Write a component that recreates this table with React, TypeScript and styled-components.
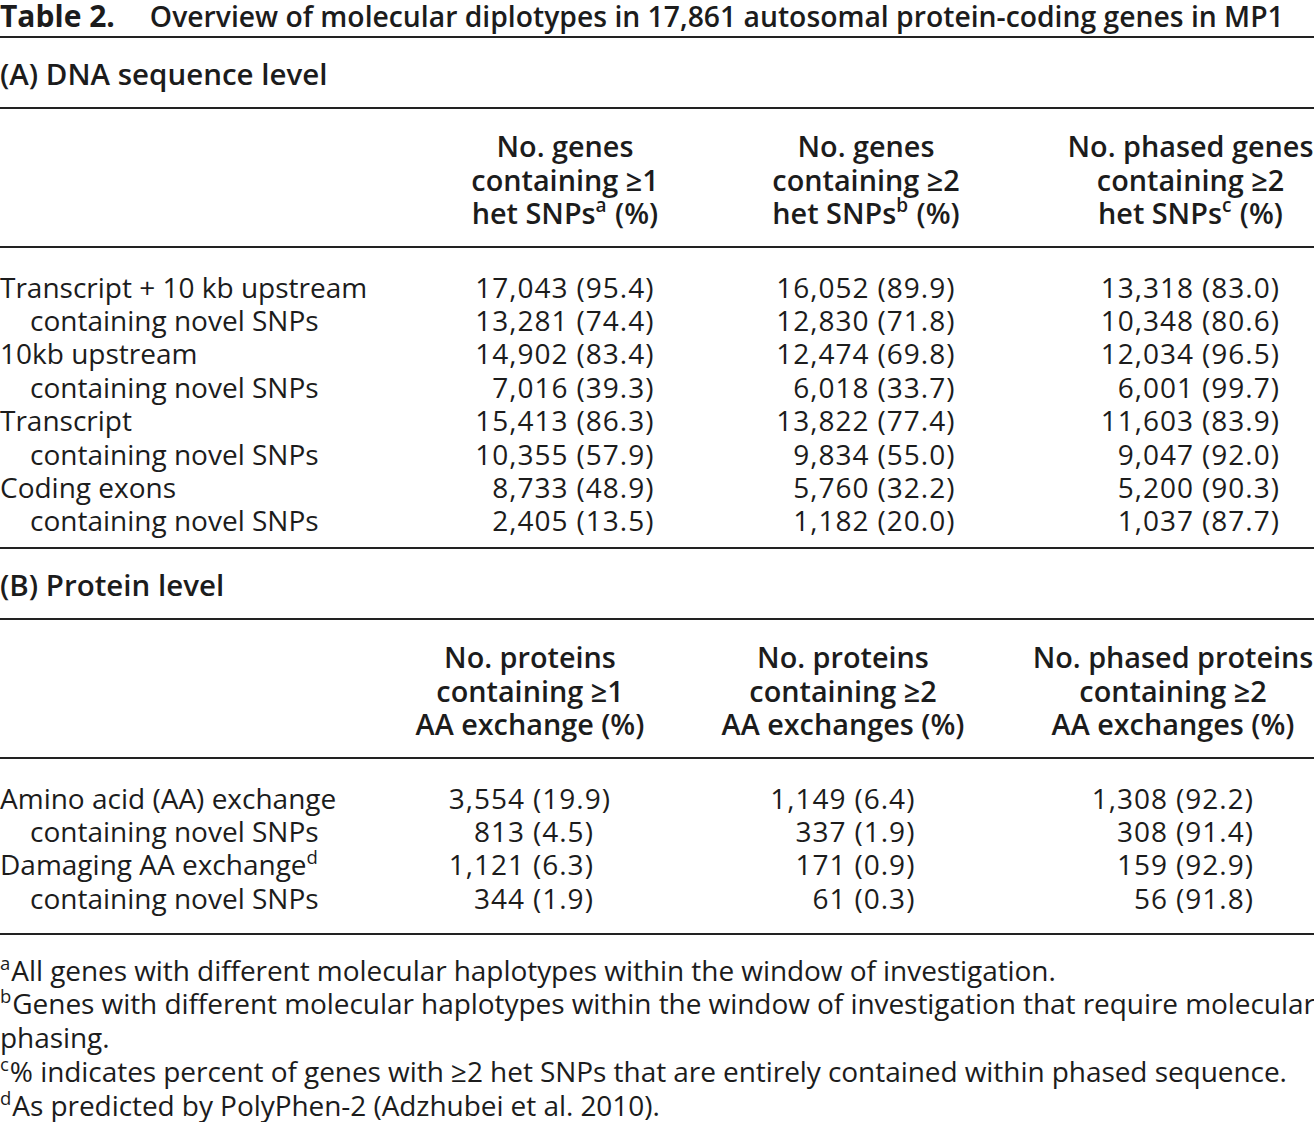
import React from "react";
import styled, { createGlobalStyle } from "styled-components";

const GlobalStyle = createGlobalStyle`
  html, body {
    margin: 0;
    padding: 0;
    background: #ffffff;
  }
  body {
    font-family: "Open Sans", "Noto Sans", "DejaVu Sans", sans-serif;
    color: #1c1c1c;
  }
`;

const Page = styled.div`
  width: 1314px;
  overflow: hidden;
  font-size: 28px;
  line-height: 33.4px;
`;

const Caption = styled.div`
  display: flex;
  align-items: baseline;
  gap: 35px;
  height: 36px;
  font-size: 28.3px;
  line-height: 31px;
  white-space: nowrap;
  font-weight: 600;
  border-bottom: 2px solid #222;

  b {
    font-size: 30px;
    font-weight: 700;
  }
`;

const SectionTitle = styled.div`
  padding: 19px 0 17px;
  font-size: 29.5px;
  font-weight: 600;
  border-bottom: 2px solid #222;
`;

type RowProps = { $cols: string; $head?: boolean; $pad: string };

const Row = styled.div<RowProps>`
  display: grid;
  grid-template-columns: ${(p) => p.$cols};
  padding: ${(p) => p.$pad};
  font-size: ${(p) => (p.$head ? "28.8px" : "inherit")};
  font-weight: ${(p) => (p.$head ? 600 : 400)};
  border-bottom: ${(p) => (p.$head ? "2px solid #222" : "none")};
`;

const Body = styled.div`
  border-bottom: 2px solid #222;
`;

const HeadCell = styled.div<{ $shift?: number }>`
  text-align: center;
  white-space: nowrap;
  padding-left: ${(p) => p.$shift ?? 0}px;
`;

const Label = styled.div<{ $indent?: boolean }>`
  white-space: nowrap;
  padding-left: ${(p) => (p.$indent ? 30 : 0)}px;
`;

const ValueCell = styled.div<{ $shift?: number }>`
  display: flex;
  justify-content: center;
  padding-left: ${(p) => p.$shift ?? 0}px;
  white-space: nowrap;
  letter-spacing: 1px;
`;

const Count = styled.span<{ $w: number }>`
  display: inline-block;
  width: ${(p) => p.$w}px;
  text-align: right;
`;

const Pct = styled.span<{ $w: number }>`
  display: inline-block;
  width: ${(p) => p.$w}px;
  margin-left: 8px;
  text-align: left;
`;

const Sup = styled.span`
  display: inline-block;
  font-size: 0.66em;
  line-height: 1;
  vertical-align: 0.62em;
  letter-spacing: 0;
  margin-right: 1px;
`;

const Notes = styled.div`
  padding-top: 19px;
  letter-spacing: -0.06px;
`;

const Note = styled.div`
  white-space: nowrap;
`;

type ColSpec = { shift?: number; countW: number; pctW: number };

type DataRow = {
  label: string;
  sup?: string;
  indent?: boolean;
  values: [string, string][];
};

type Section = {
  title: string;
  cols: string;
  colSpecs: ColSpec[];
  heads: React.ReactNode[][];
  rows: DataRow[];
  bodyPad: string;
};

const ge = "\u2265";

const sections: Section[] = [
  {
    title: "(A) DNA sequence level",
    cols: "415px 300px 302px 297px",
    colSpecs: [
      { countW: 94, pctW: 79 },
      { countW: 94, pctW: 79 },
      { shift: 50, countW: 94, pctW: 79 },
    ],
    heads: [
      ["No. genes", `containing ${ge}1`, <>het SNPs<Sup>a</Sup> (%)</>],
      ["No. genes", `containing ${ge}2`, <>het SNPs<Sup>b</Sup> (%)</>],
      ["No. phased genes", `containing ${ge}2`, <>het SNPs<Sup>c</Sup> (%)</>],
    ],
    bodyPad: "23px 0 9px",
    rows: [
      { label: "Transcript + 10 kb upstream", values: [["17,043", "(95.4)"], ["16,052", "(89.9)"], ["13,318", "(83.0)"]] },
      { label: "containing novel SNPs", indent: true, values: [["13,281", "(74.4)"], ["12,830", "(71.8)"], ["10,348", "(80.6)"]] },
      { label: "10kb upstream", values: [["14,902", "(83.4)"], ["12,474", "(69.8)"], ["12,034", "(96.5)"]] },
      { label: "containing novel SNPs", indent: true, values: [["7,016", "(39.3)"], ["6,018", "(33.7)"], ["6,001", "(99.7)"]] },
      { label: "Transcript", values: [["15,413", "(86.3)"], ["13,822", "(77.4)"], ["11,603", "(83.9)"]] },
      { label: "containing novel SNPs", indent: true, values: [["10,355", "(57.9)"], ["9,834", "(55.0)"], ["9,047", "(92.0)"]] },
      { label: "Coding exons", values: [["8,733", "(48.9)"], ["5,760", "(32.2)"], ["5,200", "(90.3)"]] },
      { label: "containing novel SNPs", indent: true, values: [["2,405", "(13.5)"], ["1,182", "(20.0)"], ["1,037", "(87.7)"]] },
    ],
  },
  {
    title: "(B) Protein level",
    cols: "380px 300px 326px 308px",
    colSpecs: [
      { countW: 77, pctW: 79 },
      { countW: 77, pctW: 62 },
      { shift: 26, countW: 77, pctW: 79 },
    ],
    heads: [
      ["No. proteins", `containing ${ge}1`, "AA exchange (%)"],
      ["No. proteins", `containing ${ge}2`, "AA exchanges (%)"],
      ["No. phased proteins", `containing ${ge}2`, "AA exchanges (%)"],
    ],
    bodyPad: "23px 0 17px",
    rows: [
      { label: "Amino acid (AA) exchange", values: [["3,554", "(19.9)"], ["1,149", "(6.4)"], ["1,308", "(92.2)"]] },
      { label: "containing novel SNPs", indent: true, values: [["813", "(4.5)"], ["337", "(1.9)"], ["308", "(91.4)"]] },
      { label: "Damaging AA exchange", sup: "d", values: [["1,121", "(6.3)"], ["171", "(0.9)"], ["159", "(92.9)"]] },
      { label: "containing novel SNPs", indent: true, values: [["344", "(1.9)"], ["61", "(0.3)"], ["56", "(91.8)"]] },
    ],
  },
];

const SectionTable = ({ section }: { section: Section }) => (
  <>
    <SectionTitle>{section.title}</SectionTitle>
    <Row $cols={section.cols} $head $pad="20px 0 16px">
      <div />
      {section.heads.map((lines, i) => (
        <HeadCell key={i} $shift={section.colSpecs[i].shift}>
          {lines.map((line, j) => (
            <div key={j}>{line}</div>
          ))}
        </HeadCell>
      ))}
    </Row>
    <Body style={{ padding: section.bodyPad }}>
      {section.rows.map((row, r) => (
        <Row key={r} $cols={section.cols} $pad="0">
          <Label $indent={row.indent}>
            {row.label}
            {row.sup && <Sup>{row.sup}</Sup>}
          </Label>
          {row.values.map(([count, pct], i) => (
            <ValueCell key={i} $shift={section.colSpecs[i].shift}>
              <Count $w={section.colSpecs[i].countW}>{count}</Count>
              <Pct $w={section.colSpecs[i].pctW}>{pct}</Pct>
            </ValueCell>
          ))}
        </Row>
      ))}
    </Body>
  </>
);

export default function App() {
  return (
    <Page>
      <GlobalStyle />
      <Caption>
        <b>Table 2.</b>
        <span>Overview of molecular diplotypes in 17,861 autosomal protein-coding genes in MP1</span>
      </Caption>
      {sections.map((s) => (
        <SectionTable key={s.title} section={s} />
      ))}
      <Notes>
        <Note>
          <Sup>a</Sup>All genes with different molecular haplotypes within the window of investigation.
        </Note>
        <Note>
          <Sup>b</Sup>Genes with different molecular haplotypes within the window of investigation that require molecular
        </Note>
        <Note>phasing.</Note>
        <Note>
          <Sup>c</Sup>% indicates percent of genes with {ge}2 het SNPs that are entirely contained within phased sequence.
        </Note>
        <Note>
          <Sup>d</Sup>As predicted by PolyPhen-2 (Adzhubei et al. 2010).
        </Note>
      </Notes>
    </Page>
  );
}
